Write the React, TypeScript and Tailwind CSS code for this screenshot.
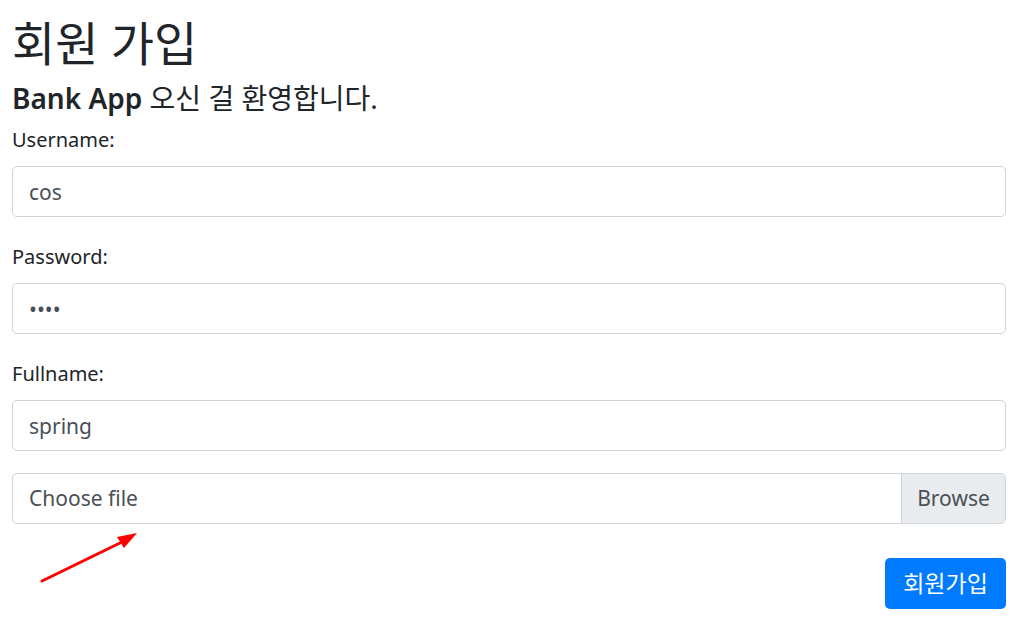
import React from "react";

const font = { fontFamily: '"Noto Sans", "Noto Sans CJK KR", sans-serif' };

function Field({ label, value, type = "text" }: { label: string; value: string; type?: string }) {
  return (
    <div className="flex flex-col">
      <label className="text-[20px] leading-[32px] text-[#212529]">{label}</label>
      <input
        type={type}
        defaultValue={value}
        readOnly
        className="mt-[10px] h-[51px] w-full rounded-[5px] border border-[#ced4da] bg-white px-[16px] text-[21px] text-[#495057] outline-none"
        style={font}
      />
    </div>
  );
}

export default function App() {
  return (
    <div className="relative min-h-[631px] bg-white pl-[12px] pr-[19px] pt-[15px]" style={font}>
      <h2 className="text-[47px] leading-[56px] font-normal text-[#212529]">회원 가입</h2>
      <h5 className="mt-[11px] text-[28px] leading-[32px] text-[#212529]">
        <b className="font-semibold">Bank App</b> 오신 걸 환영합니다.
      </h5>

      <form className="mt-[10px] flex flex-col gap-[24px]">
        <Field label="Username:" value="cos" />
        <Field label="Password:" value="1234" type="password" />
        <Field label="Fullname:" value="spring" />

        <div className="-mt-[2px] flex h-[51px] overflow-hidden rounded-[5px] border border-[#ced4da] text-[21px] text-[#495057]">
          <div className="flex flex-1 items-center px-[16px]">Choose file</div>
          <div className="flex w-[104px] items-center justify-center border-l border-[#ced4da] bg-[#e9ecef]">
            Browse
          </div>
        </div>

        <div className="mt-[10px] flex justify-end">
          <button
            type="button"
            className="h-[51px] w-[121px] rounded-[5px] bg-[#007bff] text-[23px] text-white"
            style={font}
          >
            회원가입
          </button>
        </div>
      </form>

      <svg className="pointer-events-none absolute left-0 top-0" width="1025" height="631">
        <line x1="42" y1="581" x2="122" y2="542" stroke="#ff0000" strokeWidth="3" strokeLinecap="round" />
        <polygon points="137,533 117,537 124,548" fill="#ff0000" />
      </svg>
    </div>
  );
}
